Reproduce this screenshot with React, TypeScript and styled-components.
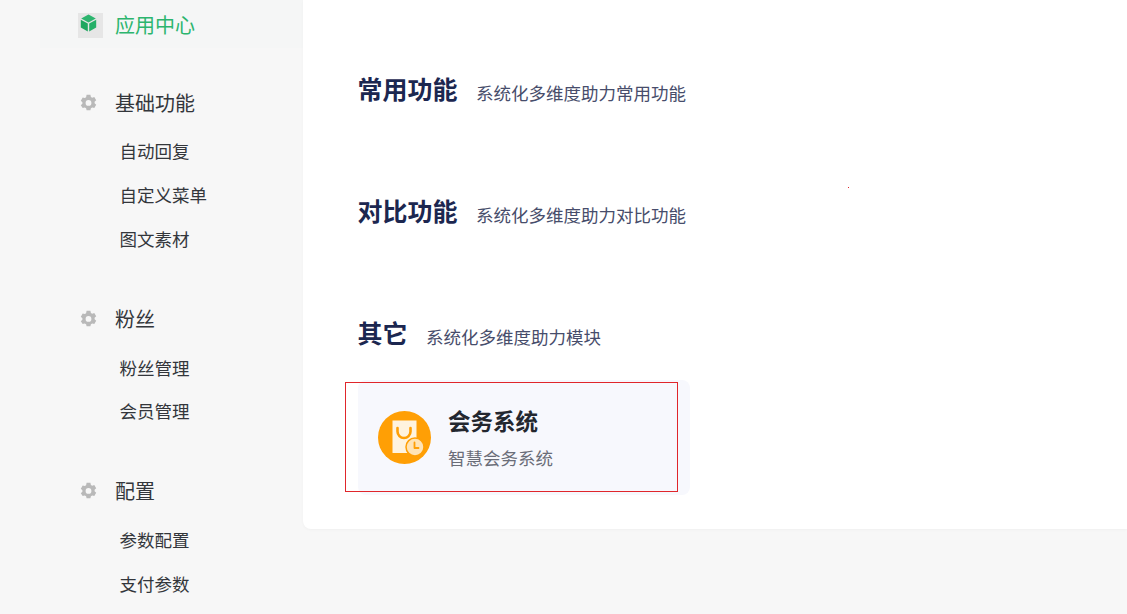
import styled, { createGlobalStyle } from "styled-components";

const GlobalStyle = createGlobalStyle`
  html, body {
    margin: 0;
    padding: 0;
    background: #f7f7f7;
    overflow: hidden;
  }
  body {
    font-family: "Noto Sans CJK SC", "Liberation Sans", sans-serif;
  }
`;

const Page = styled.div`
  display: flex;
  align-items: flex-start;
  width: 1127px;
  height: 614px;
  overflow: hidden;
`;

const Sidebar = styled.aside`
  flex: 0 0 303px;
  padding-left: 40px;
  box-sizing: border-box;
`;

const ActiveRow = styled.div`
  display: flex;
  align-items: center;
  height: 48px;
  padding: 2px 0 0 38px;
  box-sizing: border-box;
  margin-bottom: 33px;
  background: #f5f6f6;
`;

const IconBox = styled.span`
  display: flex;
  width: 25px;
  height: 25px;
  background: #e6e6e6;
  padding: 1px 0 0 2px;
  box-sizing: border-box;
`;

const ActiveLabel = styled.span`
  margin-left: 12px;
  font-size: 20px;
  line-height: 28px;
  color: #2cb56e;
`;

const Group = styled.section`
  margin-bottom: 36.75px;
`;

const GroupHead = styled.div`
  display: flex;
  align-items: center;
  height: 44px;
  margin-bottom: 4.25px;
  padding-left: 40px;
  svg {
    margin-bottom: 2px;
  }
`;

const GroupTitle = styled.span`
  margin: 0 0 2px 18px;
  font-size: 20px;
  color: #33363b;
`;

const GroupItem = styled.div`
  height: 43.75px;
  line-height: 43.75px;
  padding-left: 79.5px;
  font-size: 17.5px;
  color: #33363b;
`;

const Main = styled.main`
  position: relative;
  flex: 1;
  height: 529px;
  padding: 66px 0 0 55px;
  box-sizing: border-box;
  background: #ffffff;
  border-radius: 0 0 0 8px;
  box-shadow: 0 1px 3px rgba(0, 0, 0, 0.03);
`;

const Section = styled.section`
  display: flex;
  align-items: center;
  height: 48px;
  margin-bottom: 74px;
`;

const LastSection = styled(Section)`
  margin-bottom: 22px;
`;

const Heading = styled.h2`
  margin: 0 0 4px -0.5px;
  font-size: 25px;
  font-weight: 700;
  line-height: 48px;
  color: #1c2750;
`;

const Note = styled.span`
  margin: 5px 0 0 18.5px;
  font-size: 17.5px;
  color: #474d6b;
`;

const Card = styled.div`
  position: relative;
  display: flex;
  align-items: center;
  width: 332px;
  height: 115px;
  padding-left: 20px;
  box-sizing: border-box;
  background: #f7f8fd;
  border-radius: 8px;
`;

const Outline = styled.div`
  position: absolute;
  left: -13px;
  top: 2px;
  width: 333px;
  height: 110px;
  box-sizing: border-box;
  border: 1px solid #e0262b;
  pointer-events: none;
`;

const Dot = styled.i`
  position: absolute;
  left: 545px;
  top: 187px;
  width: 1px;
  height: 1px;
  background: #e0262b;
`;

const CardIcon = styled.svg`
  flex: none;
  width: 53px;
  height: 53px;
`;

const CardText = styled.div`
  margin-left: 17px;
`;

const CardTitle = styled.div`
  font-size: 22.5px;
  font-weight: 700;
  line-height: 32px;
  color: #23272f;
`;

const CardDesc = styled.div`
  margin-top: 9px;
  font-size: 17.5px;
  line-height: 26px;
  color: #6a6d78;
`;

const Gear = () => (
  <svg width="17" height="17" viewBox="0 0 17 17">
    <path
      fill="#b9b9b9"
      fillRule="evenodd"
      d="M6.6.8h3.8l.5 2.1 1.3.8 2.1-.6 1.9 3.2-1.6 1.5v1.5l1.6 1.5-1.9 3.2-2.1-.6-1.3.8-.5 2.1H6.6l-.5-2.1-1.3-.8-2.1.6L.8 11.2l1.6-1.5V8.2L.8 6.7l1.9-3.2 2.1.6 1.3-.8zM8.5 6a2.9 2.9 0 1 0 0 5.8 2.9 2.9 0 0 0 0-5.8z"
    />
  </svg>
);

const Cube = () => (
  <svg width="17" height="18" viewBox="0 0 17 18">
    <path fill="#2cb56e" d="M8.5.6 15.8 4.6 8.5 8.4 1.2 4.6z" />
    <path fill="#1fa760" d="M.8 5.8 7.8 9.6v7.8L.8 13.4z" />
    <path fill="#25b068" d="M16.2 5.8 9.2 9.6v7.8l7-4z" />
  </svg>
);

const MeetingIcon = () => (
  <CardIcon viewBox="0 0 53 53">
    <circle cx="26.5" cy="26.5" r="26.5" fill="#ff9f05" />
    <path fill="#fff3df" d="M14.5 9.5h24v23a9 9 0 0 0-9 9.5h-15z" />
    <path
      fill="none"
      stroke="#ff9f05"
      strokeWidth="2.6"
      strokeLinecap="round"
      d="M19.5 17v3.5a6.5 6.5 0 0 0 13 0V17"
    />
    <circle cx="37" cy="36" r="9" fill="#ffe3b5" stroke="#ff9f05" strokeWidth="1.5" />
    <path
      fill="none"
      stroke="#ff9f05"
      strokeWidth="1.8"
      strokeLinecap="round"
      strokeLinejoin="round"
      d="M36.5 31.5v5.5h4"
    />
  </CardIcon>
);

const groups = [
  { title: "基础功能", items: ["自动回复", "自定义菜单", "图文素材"] },
  { title: "粉丝", items: ["粉丝管理", "会员管理"] },
  { title: "配置", items: ["参数配置", "支付参数"] },
];

const App = () => {
  return (
    <Page>
      <GlobalStyle />
      <Sidebar>
        <ActiveRow>
          <IconBox>
            <Cube />
          </IconBox>
          <ActiveLabel>应用中心</ActiveLabel>
        </ActiveRow>
        {groups.map((group) => (
          <Group key={group.title}>
            <GroupHead>
              <Gear />
              <GroupTitle>{group.title}</GroupTitle>
            </GroupHead>
            {group.items.map((item) => (
              <GroupItem key={item}>{item}</GroupItem>
            ))}
          </Group>
        ))}
      </Sidebar>
      <Main>
        <Section>
          <Heading>常用功能</Heading>
          <Note>系统化多维度助力常用功能</Note>
        </Section>
        <Section>
          <Heading>对比功能</Heading>
          <Note>系统化多维度助力对比功能</Note>
        </Section>
        <LastSection>
          <Heading>其它</Heading>
          <Note>系统化多维度助力模块</Note>
        </LastSection>
        <Card>
          <MeetingIcon />
          <CardText>
            <CardTitle>会务系统</CardTitle>
            <CardDesc>智慧会务系统</CardDesc>
          </CardText>
          <Outline />
        </Card>
        <Dot />
      </Main>
    </Page>
  );
};

export default App;
